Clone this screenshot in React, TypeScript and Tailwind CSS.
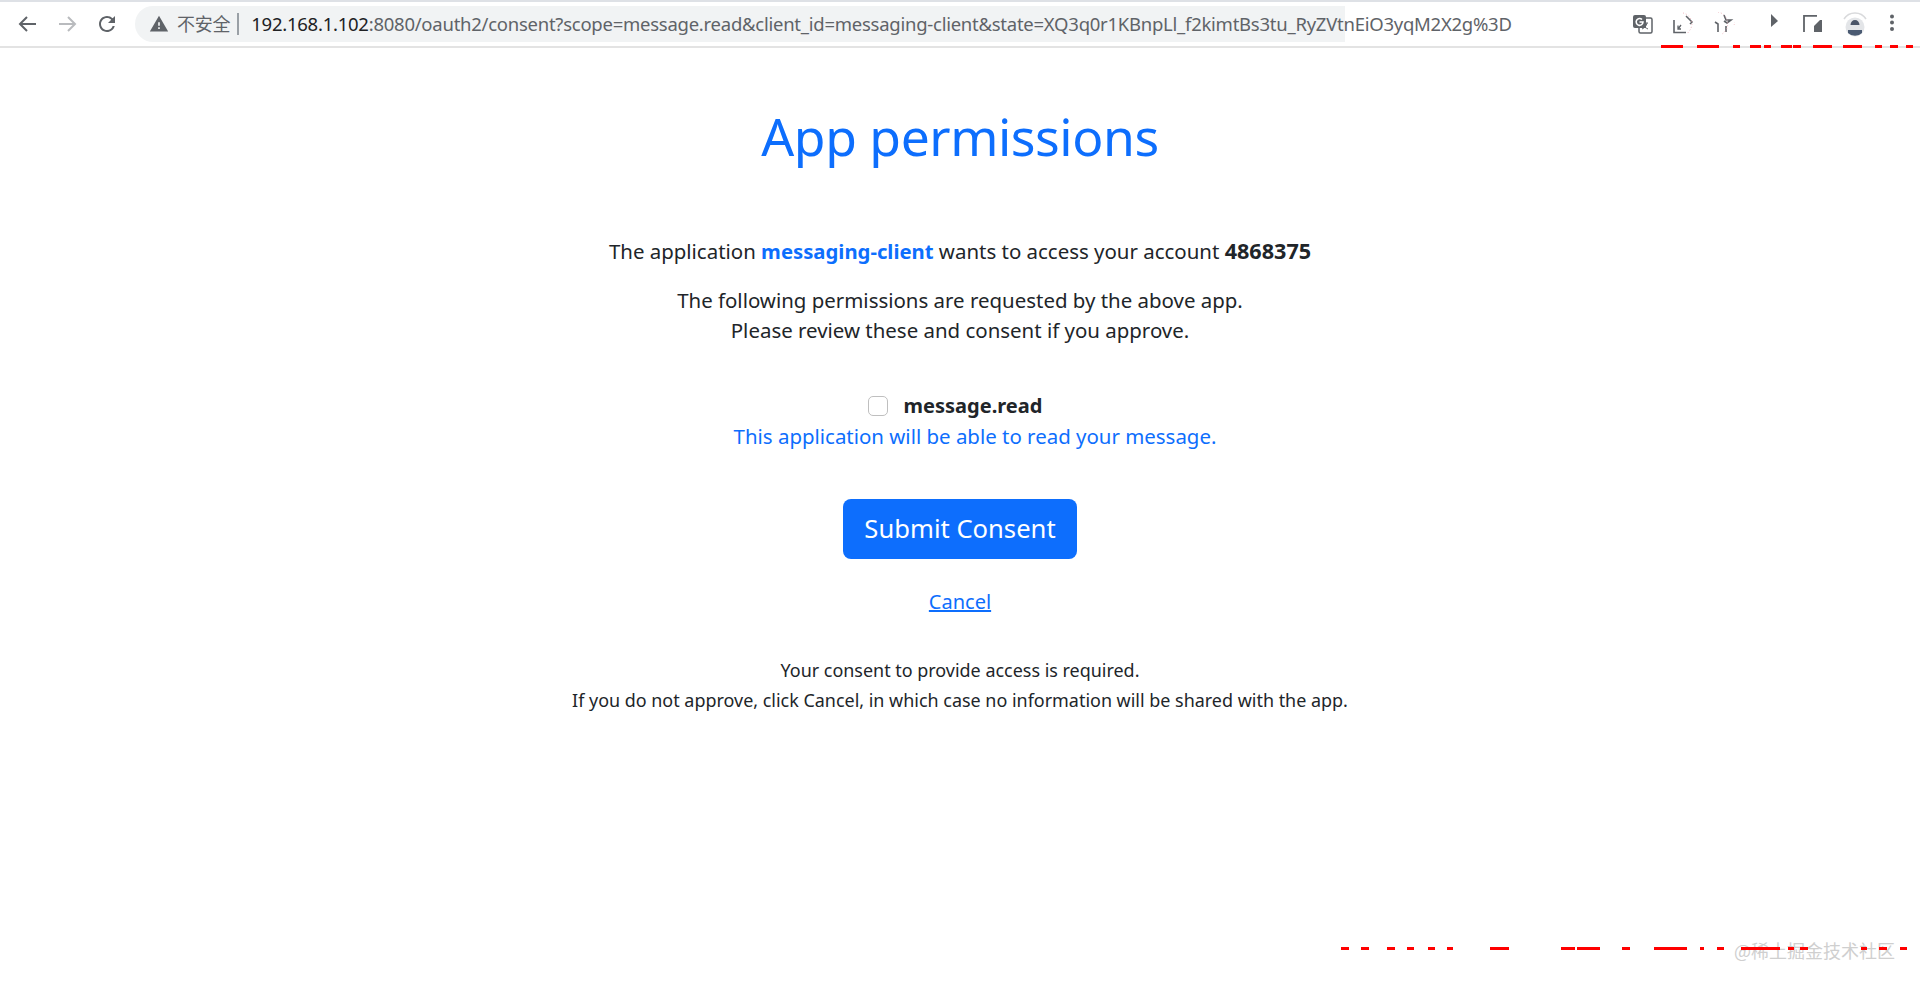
const sans = "font-['Noto_Sans','Liberation_Sans',sans-serif]";
const url = {
  host: '192.168.1.102',
  rest: ':8080/oauth2/consent?scope=message.read&client_id=messaging-client&state=XQ3q0r1KBnpLl_f2kimtBs3tu_RyZVtnEiO3yqM2X2g%3D',
};

// what is left of the red watermark, [x, width]
const topBits = [[1661, 22], [1697, 22], [1733, 7], [1750, 11], [1764, 7], [1781, 11], [1793, 8], [1813, 19], [1843, 19], [1875, 7], [1890, 8], [1906, 7]];
const bottomBits = [[1341, 8], [1361, 8], [1387, 8], [1407, 7], [1428, 7], [1447, 6], [1490, 19], [1561, 14], [1577, 23], [1622, 8], [1654, 33], [1700, 4], [1717, 7], [1741, 39], [1788, 6], [1800, 8], [1861, 6], [1879, 8], [1900, 7]];

function NavIcons() {
  return (
    <div className="flex items-center w-[135px] pl-[18px] shrink-0">
      <svg width="19" height="16" viewBox="0 0 19 16" fill="none" stroke="#5f6368" strokeWidth="2">
        <path d="M18 8H2M9 1 2 8l7 7" />
      </svg>
      <svg width="19" height="16" viewBox="0 0 19 16" fill="none" stroke="#b9bbbe" strokeWidth="2" className="ml-[21px]">
        <path d="M1 8h16M10 1l7 7-7 7" />
      </svg>
      <svg width="24" height="24" viewBox="0 0 24 24" fill="#5f6368" className="ml-[18px]">
        <path d="M17.65 6.35A7.958 7.958 0 0 0 12 4c-4.42 0-7.99 3.58-7.99 8s3.57 8 7.99 8c3.73 0 6.84-2.55 7.73-6h-2.08A5.99 5.99 0 0 1 12 18c-3.31 0-6-2.69-6-6s2.69-6 6-6c1.66 0 3.14.69 4.22 1.78L13 11h7V4l-2.35 2.35z" />
      </svg>
    </div>
  );
}

function ExtensionIcons() {
  return (
    <div className="flex items-center ml-[285px] shrink-0">
      <svg width="24" height="24" viewBox="0 0 24 24">
        <rect x="9" y="6" width="13" height="15" rx="1.5" fill="#fff" stroke="#5f6368" strokeWidth="1.5" />
        <path d="M15 9v2m-3 0h6m-1 0c-.5 3-2.5 5-5 6m1-4c1 2 3 3 5 4" fill="none" stroke="#5f6368" />
        <path d="M5 3h9a2 2 0 0 1 2 2v11H5a2 2 0 0 1-2-2V5a2 2 0 0 1 2-2z" fill="#5f6368" />
        <path d="M12 7.5A3.4 3.4 0 1 0 13 10H9.5" fill="none" stroke="#fff" strokeWidth="1.6" />
      </svg>
      <svg width="24" height="24" viewBox="0 0 24 24" fill="none" stroke="#5f6368" className="ml-[17px]">
        <path d="M3 8v12.5h12" strokeWidth="1.6" />
        <path d="M7 17l3-4M7 13.5V17h3" strokeWidth="1.3" />
        <path d="M15 4l6 6-2 2" strokeWidth="1.5" />
        <path d="M12 1a11 11 0 0 1 7 17l-3 4" stroke="#e8a0a8" strokeWidth="0.8" strokeDasharray="1 2" />
      </svg>
      <svg width="24" height="24" viewBox="0 0 24 24" fill="none" stroke="#5f6368" className="ml-[16px]">
        <path d="M4 10l3 2v8" strokeWidth="1.6" />
        <path d="M15 20v-6" strokeWidth="1.6" />
        <path d="M13 3l2 5h5l-4 3-3-2" strokeWidth="1.6" />
        <path d="M7 0a12 12 0 0 1 4 22M26 7l-3 6" stroke="#e8a0a8" strokeWidth="0.8" strokeDasharray="1 2" />
      </svg>
      <svg width="24" height="24" viewBox="0 0 24 24" fill="#5f6368" className="ml-[28px]">
        <path d="M8 2l7 7-7 6z" />
      </svg>
      <svg width="24" height="24" viewBox="0 0 24 24" className="ml-[12px]">
        <path d="M5 20V3.8h13" fill="none" stroke="#5f6368" strokeWidth="1.8" />
        <path d="M15 20v-6l6-6h2v12z" fill="#5f6368" />
      </svg>
      <svg width="28" height="28" viewBox="0 0 28 28" className="ml-[18px]">
        <path d="M3 9a13 13 0 0 1 22 0" fill="none" stroke="#d9dadc" strokeWidth="1.5" />
        <circle cx="14" cy="17" r="9.5" fill="#e3e5e8" />
        <path d="M9.5 15c0-3 2-5 4.5-5s4.5 2 4.5 5z" fill="#4a5568" />
        <path d="M7 20h14v3a10 10 0 0 1-14 0z" fill="#4a5a72" />
      </svg>
      <svg width="24" height="24" viewBox="0 0 24 24" fill="#5f6368" className="ml-[11px]">
        <circle cx="12" cy="4.5" r="2" />
        <circle cx="12" cy="10.5" r="2" />
        <circle cx="12" cy="17" r="2" />
      </svg>
    </div>
  );
}

function Toolbar() {
  return (
    <div className="h-[48px] flex items-center border-t-2 border-b-2 border-t-[#dee1e6] border-b-[#e3e3e3] bg-white overflow-hidden">
      <NavIcons />
      <div className="h-[36px] w-[1210px] rounded-l-full bg-[#f1f3f4] flex items-center pl-[14px] shrink-0 whitespace-nowrap text-[18.5px] tracking-[-0.25px] font-['Noto_Sans','Noto_Sans_CJK_SC',sans-serif]">
        <svg width="20" height="20" viewBox="0 0 24 24" fill="#5f6368" fillRule="evenodd" className="shrink-0">
          <path d="M1 21h22L12 2 1 21zm12-3h-2v-2h2v2zm0-4h-2v-4h2v4z" />
        </svg>
        <span className="ml-[8px] text-[#5f6368] text-[18px] shrink-0">不安全</span>
        <span className="ml-[7px] mr-[12px] h-[22px] w-[2px] bg-[#9aa0a6] shrink-0" />
        <span className="text-[#202124] shrink-0">{url.host}</span>
        <span className="text-[#5f6368] shrink-0">{url.rest}</span>
      </div>
      <ExtensionIcons />
    </div>
  );
}

export default function App() {
  return (
    <div className={`relative min-h-[988px] overflow-hidden bg-white text-[#212529] text-[20.45px] leading-[30px] ${sans}`}>
      <Toolbar />
      <div className="flex flex-col items-center text-center">
        <h1 className="mt-[58px] text-[51.6px] leading-[60px] text-[#0d6efd] tracking-[-0.45px]">App permissions</h1>
        <p className="mt-[70px]">
          The application <span className="font-bold text-[#0d6efd] text-[20.3px]">messaging-client</span> wants to access your account <b className="text-[21.6px]">4868375</b>
        </p>
        <p className="mt-[19px]">
          The following permissions are requested by the above app.
          <br />
          Please review these and consent if you approve.
        </p>
        <div className="mt-[46px] flex items-center gap-[16px] ml-[-10px]">
          <span className="w-[20px] h-[20px] rounded-[5px] border border-[#bfbfbf] bg-white" />
          <b className="text-[20px]">message.read</b>
        </div>
        <p className="ml-[30px] text-[#0d6efd]">This application will be able to read your message.</p>
        <button className="mt-[48px] h-[60px] w-[234px] rounded-[8px] bg-[#0d6efd] text-white text-[25.6px]">Submit Consent</button>
        <a className="mt-[28px] text-[#0d6efd] underline text-[20px]">Cancel</a>
        <p className="mt-[38px] text-[17.95px]">
          Your consent to provide access is required.
          <br />
          If you do not approve, click Cancel, in which case no information will be shared with the app.
        </p>
      </div>
      {topBits.map(([x, w]) => (
        <div key={x} className="absolute top-[45px] h-[3px] bg-[#ff0000]" style={{ left: x, width: w }} />
      ))}
      <span className="absolute left-[1734px] top-[938px] text-[18px] leading-[24px] text-[#cfcfcf] whitespace-nowrap font-['Noto_Sans_CJK_SC',sans-serif]">@稀土掘金技术社区</span>
      {bottomBits.map(([x, w]) => (
        <div key={x} className="absolute top-[947px] h-[3px] bg-[#ff0000]" style={{ left: x, width: w }} />
      ))}
    </div>
  );
}
